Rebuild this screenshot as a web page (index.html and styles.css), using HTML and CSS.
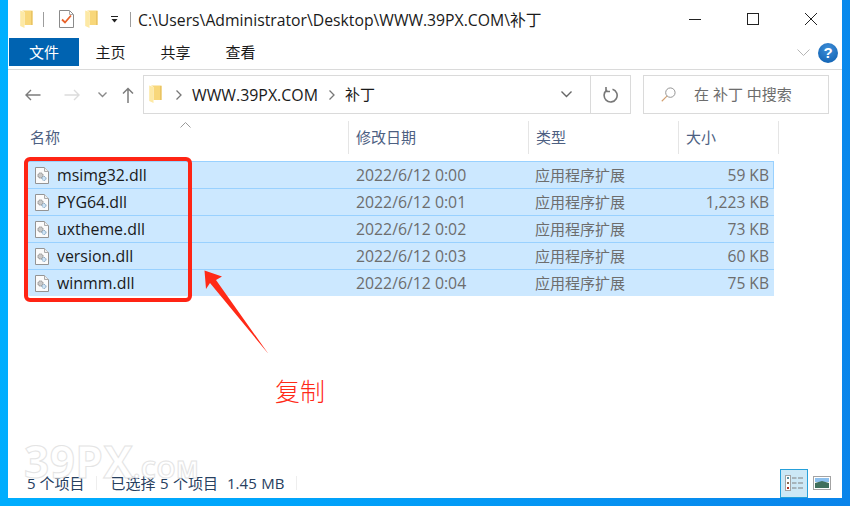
FILE: index.html
```html
<!DOCTYPE html>
<html lang="zh-CN">
<head>
<meta charset="utf-8">
<title>补丁</title>
<link rel="stylesheet" href="styles.css">
</head>
<body>
<svg width="0" height="0" class="defs">
  <defs>
    <symbol id="folder" viewBox="0 0 13 18">
      <path d="M2 0.5 H12.5 V15 H4.5 V2Z" fill="#f8d77a"/>
      <path d="M0.2 0.5 L4.5 2 V18 L0.2 16Z" fill="#fde9a5"/>
      <path d="M11 1 H12.5 V15 H11Z" fill="#e9c464"/>
    </symbol>
    <symbol id="dll" viewBox="0 0 14 17">
      <path d="M0.5 0.5 H9.5 L13.5 4.5 V16.5 H0.5Z" fill="#fbfbfb" stroke="#949494"/>
      <path d="M9.5 0.5 V4.5 H13.5" fill="#eee" stroke="#aaa"/>
      <circle cx="5.5" cy="8.5" r="2.6" fill="#c9c9c9" stroke="#777" stroke-dasharray="1.2 .8"/>
      <circle cx="9" cy="11.5" r="2" fill="#cfe4f5" stroke="#6d94b5" stroke-dasharray="1 .7"/>
    </symbol>
  </defs>
</svg>
<div class="window">
  <header class="titlebar">
    <svg class="ico-folder"><use href="#folder"/></svg>
    <span class="tsep first"></span>
    <svg class="ico-check" viewBox="0 0 15 18">
      <path d="M0.5 0.5 H10.5 L14.5 4.5 V17.5 H0.5Z" fill="#fff" stroke="#8a8a8a"/>
      <path d="M10.5 0.5 V4.5 H14.5" fill="none" stroke="#aaa"/>
      <path d="M3 9.5 L6 12.5 L12 5.5" fill="none" stroke="#e8622a" stroke-width="1.8"/>
    </svg>
    <svg class="ico-folder second"><use href="#folder"/></svg>
    <svg class="ico-qat" viewBox="0 0 7 7">
      <path d="M0 0.5 H7" stroke="#222" fill="none"/>
      <path d="M0.5 3 H6.5 L3.5 6.5Z" fill="#222"/>
    </svg>
    <span class="tsep"></span>
    <span class="path">C:\Users\Administrator\Desktop\WWW.39PX.COM\补丁</span>
    <div class="winbtns">
      <svg viewBox="0 0 12 12"><path d="M0 6.5 H12" stroke="#222" fill="none"/></svg>
      <svg viewBox="0 0 12 12"><rect x="0.5" y="0.5" width="11" height="11" fill="none" stroke="#222"/></svg>
      <svg viewBox="0 0 12 12"><path d="M0 0 L12 12 M12 0 L0 12" stroke="#222" fill="none"/></svg>
    </div>
  </header>
  <nav class="ribbon">
    <span class="tab active">文件</span>
    <span class="tab">主页</span>
    <span class="tab">共享</span>
    <span class="tab">查看</span>
    <span class="spacer"></span>
    <svg class="ribbon-chev" viewBox="0 0 13 8"><path d="M0.5 0.5 L6.5 6.5 L12.5 0.5" fill="none" stroke="#b5b5b5"/></svg>
    <span class="help">?</span>
  </nav>
  <div class="addressrow">
    <div class="navbtns">
      <svg class="back" viewBox="0 0 16 12"><path d="M15.5 6 H1 M6 1 L1 6 L6 11" fill="none" stroke="#7c7c7c" stroke-width="1.4"/></svg>
      <svg class="forward" viewBox="0 0 16 12"><path d="M0.5 6 H15 M10 1 L15 6 L10 11" fill="none" stroke="#dcdcdc" stroke-width="1.4"/></svg>
      <svg class="recent" viewBox="0 0 9 6"><path d="M0.5 0.5 L4.5 4.5 L8.5 0.5" fill="none" stroke="#8a8a8a" stroke-width="1.4"/></svg>
      <svg class="up" viewBox="0 0 12 16"><path d="M6 16 V1.5 M1 6.5 L6 1.5 L11 6.5" fill="none" stroke="#7c7c7c" stroke-width="1.5"/></svg>
    </div>
    <div class="address">
      <svg class="ico-folder addr"><use href="#folder"/></svg>
      <svg class="crumb first" viewBox="0 0 6 10"><path d="M0.5 0.5 L5 5 L0.5 9.5" fill="none" stroke="#777" stroke-width="1.3"/></svg>
      <span class="crumbtext">WWW.39PX.COM</span>
      <svg class="crumb" viewBox="0 0 6 10"><path d="M0.5 0.5 L5 5 L0.5 9.5" fill="none" stroke="#777" stroke-width="1.3"/></svg>
      <span class="crumbtext cjk">补丁</span>
      <span class="spacer"></span>
      <svg class="addr-chev" viewBox="0 0 11 7"><path d="M0.5 0.5 L5.5 5.5 L10.5 0.5" fill="none" stroke="#666" stroke-width="1.4"/></svg>
      <span class="refresh">
        <svg viewBox="0 0 16 16"><path d="M9.5 2.2 A6.5 6.5 0 1 1 4.2 2.9" fill="none" stroke="#777" stroke-width="1.6"/><path d="M4 0 V5 H8" fill="none" stroke="#777" stroke-width="1.6" transform="translate(-1 -.5)"/></svg>
      </span>
    </div>
    <div class="search">
      <svg viewBox="0 0 16 16"><circle cx="10" cy="6" r="5" fill="none" stroke="#8d8d8d"/><path d="M6.3 9.7 L0.8 15.2" stroke="#d3a070" stroke-width="1.2" fill="none"/></svg>
      <span class="search-text">在 补丁 中搜索</span>
    </div>
  </div>
  <main class="content">
    <div class="head">
      <span class="h name">名称<svg class="sort" viewBox="0 0 11 6"><path d="M0.5 5.5 L5.5 0.5 L10.5 5.5" fill="none" stroke="#9a9a9a"/></svg></span>
      <span class="h date">修改日期</span>
      <span class="h type">类型</span>
      <span class="h size">大小</span>
    </div>
    <div class="rows">
      <div class="row"><span class="c-name"><svg class="ico-dll"><use href="#dll"/></svg>msimg32.dll</span><span class="c-date">2022/6/12 0:00</span><span class="c-type">应用程序扩展</span><span class="c-size">59 KB</span></div>
      <div class="row"><span class="c-name"><svg class="ico-dll"><use href="#dll"/></svg>PYG64.dll</span><span class="c-date">2022/6/12 0:01</span><span class="c-type">应用程序扩展</span><span class="c-size">1,223 KB</span></div>
      <div class="row"><span class="c-name"><svg class="ico-dll"><use href="#dll"/></svg>uxtheme.dll</span><span class="c-date">2022/6/12 0:02</span><span class="c-type">应用程序扩展</span><span class="c-size">73 KB</span></div>
      <div class="row"><span class="c-name"><svg class="ico-dll"><use href="#dll"/></svg>version.dll</span><span class="c-date">2022/6/12 0:03</span><span class="c-type">应用程序扩展</span><span class="c-size">60 KB</span></div>
      <div class="row"><span class="c-name"><svg class="ico-dll"><use href="#dll"/></svg>winmm.dll</span><span class="c-date">2022/6/12 0:04</span><span class="c-type">应用程序扩展</span><span class="c-size">75 KB</span></div>
    </div>
  </main>
  <footer class="status">
    <span class="count">5 个项目</span>
    <span class="ssep"></span>
    <span class="sel">已选择 5 个项目&nbsp;&nbsp;1.45 MB</span>
    <span class="ssep"></span>
    <span class="spacer"></span>
    <span class="view active">
      <svg viewBox="0 0 18 16">
        <rect x="0.5" y="0.5" width="5" height="15" fill="#fff" stroke="#a3a3a3"/>
        <rect x="2" y="2" width="2" height="2" fill="#5b8f9e"/><rect x="2" y="7" width="2" height="2" fill="#8a6a4f"/><rect x="2" y="12" width="2" height="2" fill="#b03020"/>
        <path d="M7 3 H11.5 M13 3 H18 M7 8 H11.5 M13 8 H18 M7 13 H11.5 M13 13 H18" stroke="#808080" fill="none"/>
      </svg>
    </span>
    <span class="view">
      <svg viewBox="0 0 18 14">
        <rect x="0.5" y="0.5" width="17" height="13" fill="#fff" stroke="#a3a3a3"/>
        <rect x="2" y="2" width="14" height="4" fill="#8cc0ee"/>
        <path d="M2 7 L9 5 L16 7 V12 H2Z" fill="#3f6f5c"/>
      </svg>
    </span>
  </footer>
  <div class="redbox"></div>
  <svg class="arrow" viewBox="0 0 70 90"><path d="M0.5 0.5 L18 6.5 L12 10 L64.5 84 L6 13 L2 19Z" fill="#ff2a17"/></svg>
  <span class="note">复制</span>
  <span class="watermark">39PX<small>.COM</small></span>
</div>
</body>
</html>
```
FILE: styles.css
```css
* { box-sizing: border-box; }
html, body { margin: 0; height: 100%; }
body {
  width: 850px;
  height: 506px;
  overflow: hidden;
  padding: 0 8px 8px;
  background: linear-gradient(100deg, #00b0ff 0%, #00a4fb 40%, #0a84ea 100%);
  font-family: "Open Sans", "Noto Sans CJK SC", sans-serif;
  color: #1a1a1a;
}
.defs { position: absolute; }
.window {
  position: relative;
  height: 498px;
  background: #fff;
  display: flex;
  flex-direction: column;
}
.spacer { flex: 1; }

/* title bar */
.titlebar {
  height: 38px;
  display: flex;
  align-items: center;
  font-size: 15.75px;
  padding-left: 12px;
}
.ico-folder { width: 13px; height: 18px; flex: none; }
.tsep { width: 1px; height: 15px; background: #9d9d9d; flex: none; }
.tsep.first { margin-left: 10px; margin-right: 15px; }
.ico-check { width: 15px; height: 18px; margin-right: 11px; flex: none; }
.ico-folder.second { margin-right: 13px; }
.ico-qat { width: 7px; height: 7px; margin-right: 12px; flex: none; }
.path { margin-left: 7px; white-space: nowrap; }
.winbtns { margin-left: auto; display: flex; gap: 46px; margin-right: 25px; }
.winbtns svg { width: 12px; height: 12px; }

/* ribbon */
.ribbon {
  height: 32px;
  display: flex;
  align-items: flex-start;
  font-size: 15px;
  border-bottom: 1px solid #dadada;
}
.tab { width: 65px; height: 28px; line-height: 29px; text-align: center; flex: none; margin-left: -1px; margin-right: 1px; }
.tab.active { width: 70px; margin-left: 1px; margin-right: 0; background: #0063b1; color: #fff; }
.ribbon-chev { width: 13px; height: 8px; margin: 11px 8px 0 0; }
.help {
  width: 20px; height: 20px; margin: 5px 4px 0 0; border-radius: 50%;
  background: radial-gradient(circle at 50% 30%, #3f8fd8, #0a5cae);
  color: #fff; font: bold 15px/20px "Liberation Sans", sans-serif; text-align: center;
}

/* address row */
.addressrow {
  height: 51px;
  display: flex;
  align-items: flex-start;
  padding-top: 5px;
}
.navbtns { width: 135px; height: 39px; display: flex; align-items: center; flex: none; padding-left: 17px; }
.back, .forward { width: 16px; height: 12px; flex: none; }
.forward { margin-left: 23px; }
.recent { width: 9px; height: 6px; margin-left: 18px; flex: none; }
.up { width: 12px; height: 16px; margin-left: 15px; flex: none; }
.address {
  width: 488px; height: 39px;
  border: 1px solid #dadada;
  display: flex; align-items: center;
  font-size: 15.9px;
  padding-left: 5px;
}
.ico-folder.addr { margin-right: 14px; margin-bottom: 1px; }
.crumb { width: 6px; height: 10px; flex: none; }
.crumb.first { margin-right: 10px; }
.crumbtext { white-space: nowrap; }
.crumbtext.cjk { font-size: 15px; margin-bottom: 2px; }
.crumbtext + .crumb { margin: 0 10px 0 11px; }
.addr-chev { width: 11px; height: 7px; margin-right: 18px; flex: none; }
.refresh { width: 40px; height: 37px; border-left: 1px solid #dadada; display: flex; align-items: center; justify-content: center; flex: none; }
.refresh svg { width: 16px; height: 16px; }
.search {
  width: 186px; height: 39px; margin-left: 12px;
  border: 1px solid #dadada;
  display: flex; align-items: center;
  font-size: 15px; color: #6d6d6d;
  padding-left: 17px;
}
.search svg { width: 15px; height: 15px; margin-right: 18px; flex: none; }
.search-text { margin-bottom: 2px; }

/* list */
.content { flex: 1; position: relative; padding-left: 16px; }
.head { height: 33px; display: flex; font-size: 15px; color: #4d6082; }
.h { height: 33px; line-height: 32px; border-right: 1px solid #e5e5e5; flex: none; padding-left: 6px; position: relative; }
.name { width: 325px; }
.date { width: 180px; padding-left: 7px; }
.type { width: 150px; padding-left: 7px; }
.size { width: 100px; padding-left: 7px; }
.sort { position: absolute; width: 11px; height: 6px; left: 156px; top: 1px; }
.rows { margin-top: 7px; width: 750px; }
.row {
  height: 27px;
  display: flex;
  align-items: center;
  background: #cce8ff;
  border-top: 1px solid #99d1ff;
  color: #6d6d6d;
}
.rows .row:first-child { border: 1px solid #99d1ff; border-bottom: 0; }
.row:first-child .c-name { width: 324px; padding-left: 10px; }
.c-name { width: 325px; padding-left: 11px; font-size: 15.9px; color: #1a1a1a; display: flex; align-items: center; flex: none; white-space: nowrap; }
.ico-dll { width: 14px; height: 17px; margin-right: 8px; flex: none; }
.c-date { width: 180px; padding-left: 7px; flex: none; font-size: 15.8px; }
.c-type { width: 150px; padding-left: 6px; margin-bottom: 2px; flex: none; font-size: 15px; }
.c-size { width: 90px; text-align: right; flex: none; font-size: 15.6px; }

/* status bar */
.status { height: 30px; display: flex; align-items: center; font-size: 15px; color: #27405f; padding-left: 19px; }
.count, .sel { margin-bottom: 2px; }
.ssep { width: 1px; height: 14px; background: #eeeeee; margin: 0 13px 0 12px; flex: none; }
.sel { white-space: nowrap; word-spacing: 0.6px; }
.view { width: 28px; height: 29px; display: flex; align-items: center; justify-content: center; flex: none; }
.view.active { background: #cce8f6; border: 1px solid #26a0da; }
.view svg { width: 18px; height: 16px; }
.view:last-child { margin-right: 6px; }

/* annotations */
.redbox { position: absolute; left: 16px; top: 157px; width: 168px; height: 145px; border: 4px solid #ff2414; border-radius: 6px; }
.arrow { position: absolute; left: 196px; top: 270px; width: 70px; height: 90px; }
.note { position: absolute; left: 267px; top: 373px; font: 25px/34px "Noto Sans CJK SC", sans-serif; font-weight: 300; color: #ff2a17; }
.watermark {
  position: absolute; left: 16px; top: 436px;
  font: bold 44px/50px "Open Sans", sans-serif;
  color: #fff;
  -webkit-text-stroke: 1px #e4e4e4;
  letter-spacing: 0.5px;
}
.watermark small { font-size: 24px; font-weight: bold; }
```
